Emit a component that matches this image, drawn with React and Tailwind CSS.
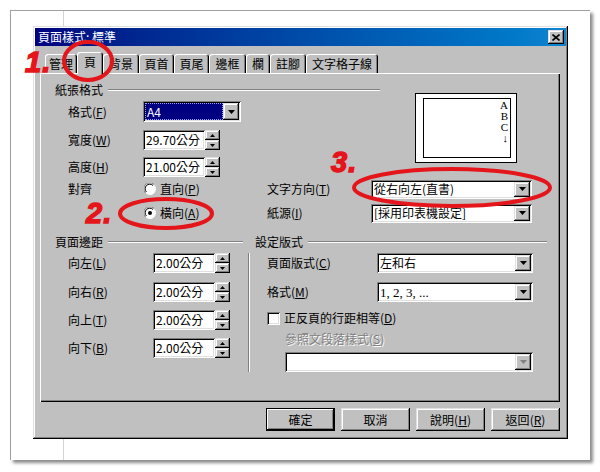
import React from 'react';

const raised = 'shadow-[inset_-1px_-1px_#000,inset_1px_1px_#dfdfdf,inset_-2px_-2px_#808080,inset_2px_2px_#fff]';
const sunken = 'shadow-[inset_1px_1px_#808080,inset_-1px_-1px_#fff,inset_2px_2px_#000,inset_-2px_-2px_#dfdfdf]';

const Key = ({ text, k }) => (
  <span className="whitespace-nowrap">
    {text}
    {k && (
      <>
        (<span className="underline underline-offset-1">{k}</span>)
      </>
    )}
  </span>
);

const Arrow = ({ color = '#000' }) => (
  <svg width="7" height="4" viewBox="0 0 7 4">
    <polygon points="0,0 7,0 3.5,4" fill={color} />
  </svg>
);

const Select = ({ value, className, active, disabled, serif }) => (
  <div className={`flex bg-white p-[2px] ${sunken} ${className}`}>
    <div className="flex-1 flex items-center overflow-hidden">
      {active ? (
        <div className="h-full w-full flex items-center bg-[#000080] text-white pl-[1px] border border-dotted border-[#a0a0ff]">
          {value}
        </div>
      ) : (
        <span className={`pl-[1px] whitespace-nowrap ${serif ? "font-['Liberation_Serif',serif] text-[13px]" : ''}`}>{value}</span>
      )}
    </div>
    <div className={`w-[16px] h-full bg-[#c0c0c0] flex items-center justify-center ${raised}`}>
      <Arrow color={disabled ? '#808080' : '#000'} />
    </div>
  </div>
);

const SpinArrow = ({ up }) => (
  <svg width="5" height="3" viewBox="0 0 5 3">
    <polygon points={up ? '2.5,0 5,3 0,3' : '0,0 5,0 2.5,3'} fill="#000" />
  </svg>
);

const Spin = ({ value }) => (
  <div className="flex h-[20px]">
    <div className={`w-[62px] h-full bg-white flex items-center pl-[3px] ${sunken}`}>
      <span className="whitespace-nowrap">{value}</span>
    </div>
    <div className="w-[15px] h-full flex flex-col">
      <div className={`h-[10px] bg-[#c0c0c0] flex items-center justify-center ${raised}`}>
        <SpinArrow up />
      </div>
      <div className={`h-[10px] bg-[#c0c0c0] flex items-center justify-center ${raised}`}>
        <SpinArrow />
      </div>
    </div>
  </div>
);

const Radio = ({ checked }) => (
  <svg width="12" height="12" viewBox="0 0 12 12">
    <circle cx="6" cy="6" r="5.5" fill="#fff" stroke="#fff" />
    <path d="M1.5 10 A5.5 5.5 0 0 1 10 1.5" fill="none" stroke="#808080" />
    <path d="M2.5 9 A4.4 4.4 0 0 1 9 2.5" fill="none" stroke="#000" />
    {checked && <circle cx="6" cy="6" r="2" fill="#000" />}
  </svg>
);

const Etched = ({ className }) => (
  <div className={`h-0 border-t border-b border-t-[#808080] border-b-white ${className}`} />
);

const tabs = [
  { name: '管理', w: 'w-[32px]' },
  { name: '頁', w: 'w-[26px]', active: true },
  { name: '背景', w: 'w-[36px]' },
  { name: '頁首', w: 'w-[35px]' },
  { name: '頁尾', w: 'w-[35px]' },
  { name: '邊框', w: 'w-[37px]' },
  { name: '欄', w: 'w-[24px]' },
  { name: '註腳', w: 'w-[36px]' },
  { name: '文字格子線', w: 'w-[72px]' },
];

const margins = [
  { text: '向左', k: 'L', mt: 'mt-[3px]' },
  { text: '向右', k: 'R', mt: 'mt-[9px]' },
  { text: '向上', k: 'T', mt: 'mt-[8px]' },
  { text: '向下', k: 'B', mt: 'mt-[8px]' },
];

const buttons = [
  { text: '確定', def: true },
  { text: '取消' },
  { text: '說明', k: 'H' },
  { text: '返回', k: 'R' },
];

const mark = "absolute text-[29px] leading-none font-bold italic text-[#e4161b] font-['Liberation_Sans',sans-serif] [-webkit-text-stroke:1.5px_#e4161b] tracking-[1px]";

export default function App() {
  return (
    <div className="relative w-[600px] h-[472px] bg-white overflow-hidden pt-[10px] pl-[10px] font-['Noto_Sans_CJK_TC','Noto_Sans_CJK_SC',sans-serif] text-[12px] leading-none text-black">
      {/* paper sheet */}
      <div className="relative w-[580px] h-[450px] bg-white border-l border-t border-[#a0a0a0] shadow-[3px_3px_3px_rgba(0,0,0,0.45)] pt-[15px] pl-[22px]">
        <div className="absolute left-[52px] top-0 bottom-0 w-px bg-[#d4d4d4]" />

        {/* dialog */}
        <div className={`relative w-[535px] h-[413px] bg-[#c0c0c0] p-[2px] ${raised}`}>
          <div className="h-[18px] bg-linear-to-r from-[#000080] to-[#1084d0] flex items-center justify-between pl-[3px] pr-[2px]">
            <span className="text-white text-[12px]">頁面樣式: 標準</span>
            <div className={`w-[16px] h-[14px] bg-[#c0c0c0] flex items-center justify-center ${raised}`}>
              <svg width="8" height="7" viewBox="0 0 8 7">
                <path d="M0.5 0.5 L7.5 6.5 M7.5 0.5 L0.5 6.5" stroke="#000" strokeWidth="1.6" />
              </svg>
            </div>
          </div>

          {/* tabs */}
          <div className="mt-[6px] h-[21px] flex items-end pl-[10px]">
            {tabs.map((t) =>
              t.active ? (
                <div
                  key={t.name}
                  className={`relative z-10 ${t.w} h-[22px] -mb-[1px] bg-[#c0c0c0] rounded-t-[3px] flex items-center justify-center pb-[2px] shadow-[inset_1px_1px_#fff,inset_-1px_0_#000,inset_-2px_0_#808080]`}
                >
                  {t.name}
                </div>
              ) : (
                <div
                  key={t.name}
                  className={`${t.w} h-[19px] bg-[#c0c0c0] rounded-t-[3px] flex items-center justify-center shadow-[inset_1px_1px_#fff,inset_-1px_0_#000,inset_-2px_0_#808080]`}
                >
                  {t.name}
                </div>
              )
            )}
          </div>

          {/* panel */}
          <div className="ml-[5px] w-[520px] h-[329px] shadow-[inset_1px_1px_#fff,inset_-1px_-1px_#000,inset_-2px_-2px_#808080]">
            <div className="flex h-[104px]">
              <div className="w-[340px]">
                <div className="mt-[9px] h-[16px] flex items-center pl-[15px]">
                  <span>紙張格式</span>
                  <Etched className="flex-1 ml-[5px]" />
                </div>
                <div className="mt-[3px] h-[21px] flex items-center pl-[28px]">
                  <div className="w-[75px]"><Key text="格式" k="F" /></div>
                  <Select value="A4" className="w-[98px] h-[21px]" active />
                </div>
                <div className="mt-[8px] h-[20px] flex items-center pl-[28px]">
                  <div className="w-[75px]"><Key text="寬度" k="W" /></div>
                  <Spin value="29.70公分" />
                </div>
                <div className="mt-[7px] h-[20px] flex items-center pl-[28px]">
                  <div className="w-[75px]"><Key text="高度" k="H" /></div>
                  <Spin value="21.00公分" />
                </div>
              </div>
              <div className="ml-[35px] mt-[20px] w-[102px] h-[70px] bg-white border border-black pl-[7px] pt-[4px]">
                <div className="w-[88px] h-[60px] border border-black flex flex-col items-end pr-[2px] pt-[1px] font-['Liberation_Serif',serif] text-[11px] leading-[11px]">
                  <span>A</span>
                  <span>B</span>
                  <span>C</span>
                  <span>↓</span>
                </div>
              </div>
            </div>

            <div className="mt-[2px] h-[20px] flex items-center pl-[28px]">
              <div className="w-[75px]">對齊</div>
              <div className="w-[124px] flex items-center pl-[1px]">
                <Radio />
                <span className="ml-[4px]"><Key text="直向" k="P" /></span>
              </div>
              <div className="w-[104px]"><Key text="文字方向" k="T" /></div>
              <Select value="從右向左(直書)" className="w-[161px] h-[19px]" />
            </div>
            <div className="mt-[4px] h-[20px] flex items-center pl-[28px]">
              <div className="w-[75px]" />
              <div className="w-[124px] flex items-center pl-[1px]">
                <Radio checked />
                <span className="ml-[4px]"><Key text="橫向" k="A" /></span>
              </div>
              <div className="w-[104px]"><Key text="紙源" k="I" /></div>
              <Select value="[採用印表機設定]" className="w-[161px] h-[19px]" />
            </div>

            <div className="mt-[11px] h-[16px] flex">
              <div className="w-[208px] flex items-center pl-[15px]">
                <span>頁面邊距</span>
                <Etched className="flex-1 ml-[5px] mr-[5px]" />
              </div>
              <div className="flex-1 flex items-center pl-[7px]">
                <span>設定版式</span>
                <Etched className="flex-1 ml-[5px] mr-[13px]" />
              </div>
            </div>

            <div className="flex">
              <div className="w-[208px] pl-[28px]">
                {margins.map((m) => (
                  <div key={m.k} className={`${m.mt} h-[20px] flex items-center`}>
                    <div className="w-[85px]"><Key text={m.text} k={m.k} /></div>
                    <Spin value="2.00公分" />
                  </div>
                ))}
              </div>
              <div className="mt-[3px] h-[119px] w-0 border-l border-r border-l-[#808080] border-r-white" />
              <div className="flex-1 pl-[17px]">
                <div className="mt-[3px] h-[20px] flex items-center">
                  <div className="w-[110px]"><Key text="頁面版式" k="C" /></div>
                  <Select value="左和右" className="w-[156px] h-[20px]" />
                </div>
                <div className="mt-[9px] h-[20px] flex items-center">
                  <div className="w-[110px]"><Key text="格式" k="M" /></div>
                  <Select value="1, 2, 3, ..." className="w-[156px] h-[20px]" serif />
                </div>
                <div className="mt-[8px] h-[16px] flex items-center">
                  <div className={`w-[13px] h-[13px] bg-white ${sunken}`} />
                  <span className="ml-[4px]"><Key text="正反頁的行距相等" k="D" /></span>
                </div>
                <div className="mt-[6px] h-[14px] flex items-center pl-[18px] text-[#808080] [text-shadow:1px_1px_#fff]">
                  <Key text="參照文段落樣式" k="S" />
                </div>
                <div className="mt-[6px] ml-[18px]">
                  <Select value="" className="w-[248px] h-[20px]" disabled />
                </div>
              </div>
            </div>
          </div>

          {/* buttons */}
          <div className="mt-[6px] ml-[5px] w-[520px] h-[23px] flex justify-end gap-[6px]">
            {buttons.map((b) => (
              <div
                key={b.text}
                className={`w-[69px] h-[23px] bg-[#c0c0c0] flex items-center justify-center ${
                  b.def
                    ? 'shadow-[inset_0_0_0_1px_#000,inset_-2px_-2px_#000,inset_2px_2px_#fff,inset_-3px_-3px_#808080]'
                    : raised
                }`}
              >
                <Key text={b.text} k={b.k} />
              </div>
            ))}
          </div>
        </div>
      </div>

      {/* red annotations */}
      <svg className="absolute inset-0 pointer-events-none" width="600" height="472" viewBox="0 0 600 472">
        <ellipse cx="88" cy="61" rx="24" ry="19" fill="none" stroke="#e4161b" strokeWidth="4" />
        <ellipse cx="166" cy="213.5" rx="46" ry="14.5" fill="none" stroke="#e4161b" strokeWidth="4" />
        <ellipse cx="452" cy="187.5" rx="98" ry="18.5" fill="none" stroke="#e4161b" strokeWidth="4" />
      </svg>
      <div className={`${mark} left-[25px] top-[48px]`}>1.</div>
      <div className={`${mark} left-[86px] top-[199px]`}>2.</div>
      <div className={`${mark} left-[331px] top-[148px]`}>3.</div>
    </div>
  );
}
